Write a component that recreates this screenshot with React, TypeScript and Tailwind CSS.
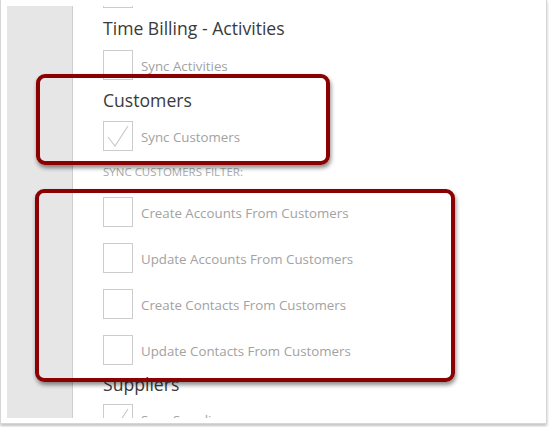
import React from "react";

const font = { fontFamily: '"Open Sans", "Noto Sans", sans-serif' };

function Box({ checked = false }: { checked?: boolean }) {
  return (
    <div className="w-[30px] h-[30px] border border-[#cccccc] bg-white shrink-0 flex items-center justify-center">
      {checked && (
        <svg width="26" height="26" viewBox="0 0 26 26">
          <path d="M3 14 L10 23 L23 3" fill="none" stroke="#c8c8c8" strokeWidth="1.1" />
        </svg>
      )}
    </div>
  );
}

function Row({ label, checked = false, className = "" }: { label: string; checked?: boolean; className?: string }) {
  return (
    <div className={"flex items-center gap-[8px] h-[30px] " + className}>
      <Box checked={checked} />
      <span className="text-[13.3px] text-[#a2a2a2] leading-none pt-[3px]">{label}</span>
    </div>
  );
}

function Heading({ children, className = "" }: { children: React.ReactNode; className?: string }) {
  return <div className={"text-[17.6px] leading-[24px] text-[#3a3a3a] " + className}>{children}</div>;
}

export default function App() {
  return (
    <div className="relative w-[549px] h-[427px] bg-white overflow-hidden" style={font}>
      <div className="w-[547px] h-[424px] border-l border-r border-b border-[#d6d6d6] bg-white shadow-[0_2px_3px_rgba(0,0,0,0.25)] pt-[6px] pl-[6px]">
        <div className="flex h-[412px] overflow-hidden">
          <div className="w-[66px] shrink-0 bg-[#e6e6e6] border-r border-[#cfcfcf]" />
          <div className="flex flex-col pl-[30px] mt-[-28px]">
            <Row label="" />
            <Heading className="mt-[8px]">Time Billing - Activities</Heading>
            <Row label="Sync Activities" className="mt-[10px]" />
            <Heading className="mt-[8px]">Customers</Heading>
            <Row label="Sync Customers" checked className="mt-[9px]" />
            <div className="mt-[14px] text-[11.5px] leading-[14px] text-[#aaaaaa] uppercase">Sync Customers Filter:</div>
            <Row label="Create Accounts From Customers" className="mt-[18px]" />
            <Row label="Update Accounts From Customers" className="mt-[16px]" />
            <Row label="Create Contacts From Customers" className="mt-[16px]" />
            <Row label="Update Contacts From Customers" className="mt-[16px]" />
            <Heading className="mt-[7px]">Suppliers</Heading>
            <Row label="Sync Suppliers" checked className="mt-[8px]" />
          </div>
        </div>
      </div>
      <div className="absolute left-[36px] top-[74px] w-[294px] h-[91px] border-[4px] border-[#8b0000] rounded-[9px] shadow-[1px_3px_4px_rgba(0,0,0,0.45)]" />
      <div className="absolute left-[35px] top-[189px] w-[420px] h-[193px] border-[4px] border-[#8b0000] rounded-[9px] shadow-[1px_3px_4px_rgba(0,0,0,0.45)]" />
    </div>
  );
}
